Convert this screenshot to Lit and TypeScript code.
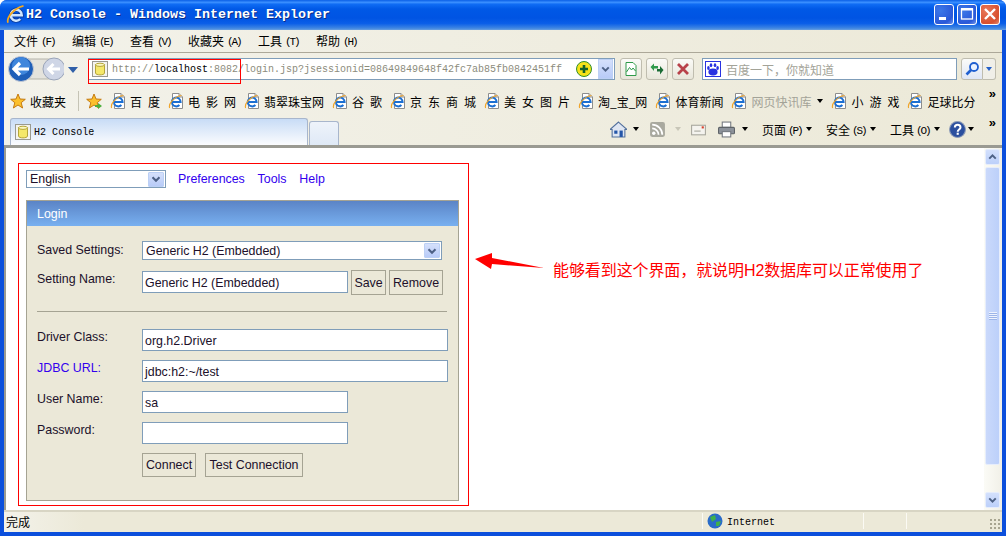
import { LitElement, html, css, svg } from "lit";
import { customElement } from "lit/decorators.js";

const chev = html`<svg class="chev" viewBox="0 0 16 16"><path d="M4 6 L8 10 L12 6" fill="none" stroke="#4d6185" stroke-width="2.4"/></svg>`;
const db = html`<svg class="ico16" viewBox="0 0 16 16"><rect x=".5" y=".5" width="15" height="15" fill="#f4f3ee" stroke="#9a9a90"/><path d="M3.5 3.5 V12 C3.5 14.5 12.5 14.5 12.5 12 V3.5Z" fill="#f5e86a" stroke="#b5a53a"/><ellipse cx="8" cy="3.8" rx="4.5" ry="1.6" fill="#fbf7c0" stroke="#b5a53a"/></svg>`;
const logoE = (w = 1.9) => svg`<path d="M4.6 9 H12.6 A4.4 4.4 0 1 0 11.4 12" fill="none" stroke="#1c6fd2" stroke-width="${w}"/><path d="M1.6 15 C.2 11 6 3.5 13.5 2.5" fill="none" stroke="#f0a326" stroke-width="1.1"/>`;
const pageE = html`<svg class="ico16" viewBox="0 0 16 16"><path d="M4.5 .5 H11 L14.5 4 V15.5 H4.5Z" fill="#fff" stroke="#8d8d8d"/><path d="M11 .5 V4 H14.5" fill="#e4e4e4" stroke="#8d8d8d"/>${logoE(2)}</svg>`;
const star = svg`<path d="M8 1 L10 6 L15.3 6.3 L11.2 9.7 L12.6 15 L8 12 L3.4 15 L4.8 9.7 L.7 6.3 L6 6Z" fill="#fbc02d" stroke="#c47a12"/>`;
const more = html`<span class="more">»</span>`;

type Fav = { t: string; dim?: boolean; menu?: boolean };
const favs: Fav[] = [
  { t: "百 度" }, { t: "电 影 网" }, { t: "翡翠珠宝网" }, { t: "谷 歌" }, { t: "京 东 商 城" },
  { t: "美 女 图 片" }, { t: "淘_宝_网" }, { t: "体育新闻" }, { t: "网页快讯库", dim: true, menu: true },
  { t: "小 游 戏" }, { t: "足球比分" },
];
const menus = [["文件", "(F)"], ["编辑", "(E)"], ["查看", "(V)"], ["收藏夹", "(A)"], ["工具", "(T)"], ["帮助", "(H)"]];

@customElement("app-root")
export class AppRoot extends LitElement {
  static styles = css`
    :host { display: block; width: 1006px; height: 536px; overflow: hidden; background: #fff;
      font-family: "Noto Sans CJK SC", "Liberation Sans", sans-serif; font-size: 12px; color: #000; }
    * { box-sizing: border-box; }
    .win { height: 536px; display: flex; flex-direction: column; border-radius: 7px 7px 0 0; overflow: hidden;
      background: #0b4fdc; }
    .title { height: 30px; flex: none; display: flex; align-items: center; padding: 0 6px 2px 6px;
      background: linear-gradient(180deg,#0a5fe6 0,#3a8fff 8%,#0f6cf4 14%,#0058e6 30%,#0054e3 60%,#0a5ee8 78%,#3f86e2 94%,#6aa0e0 100%); }
    .logo { width: 20px; height: 20px; flex: none; }
    .title-text { color: #fff; font: bold 13.33px "Liberation Mono", monospace; text-shadow: 1px 1px 0 #0a2f8a; white-space: pre; }
    .wbtns { margin-left: auto; display: flex; gap: 3px; }
    .wbtn { width: 20px; height: 21px; border: 1px solid #fff; border-radius: 3px; display: flex; align-items: center; justify-content: center;
      background: radial-gradient(circle at 30% 30%, #3c78e8, #2a58d8 70%, #6f94ea); }
    .wbtn.close { background: radial-gradient(circle at 30% 30%, #e8785a, #d8502e 70%, #e08a70); }
    .wbtn svg { width: 16px; height: 16px; }
    .inner { flex: 1; margin: 0 4px 4px 4px; min-height: 0; display: flex; flex-direction: column; background: #ece9d8; position: relative; }
    .menu { height: 23px; flex: none; display: flex; gap: 18px; align-items: center; padding: 0 0 1px 10px;
      background: linear-gradient(90deg,#f3f2ea,#ece9d8); border-bottom: 1px solid #aca899; }
    .mitem { display: flex; align-items: center; white-space: nowrap; }
    .key { font: 11px/12px "Liberation Mono", monospace; letter-spacing: -2.1px; margin-left: 3px; width: 13px; padding-top: 3px; }
    .addr { height: 34px; flex: none; display: flex; align-items: center; padding: 0 0 2px 4px;
      background: linear-gradient(90deg,#f3f2ea,#ece9d8); }
    .nav { width: 56px; height: 26px; flex: none; }
    .navcaret { width: 0; height: 0; border: 5px solid transparent; border-top: 6px solid #2f5fa8; border-bottom: 0; margin: 1px 10px 0 4px; flex: none; }
    .urlbox { width: 527px; height: 22px; flex: none; background: #fff; border: 1px solid #7f9db9; display: flex; align-items: center; padding: 0 1px 0 3px; }
    .url { margin-left: 4px; font: 10px "Liberation Mono", monospace; color: #8c8c7c; white-space: pre; }
    .url b { color: #000; font-weight: normal; }
    .plus { width: 16px; height: 16px; margin-left: 14px; flex: none; }
    .ddbtn { width: 15px; height: 20px; margin-left: auto; background: linear-gradient(#d5e0fb,#b8cbf8); border: 1px solid #bcd0f5; display: flex; align-items: center; justify-content: center; }
    .chev { width: 14px; height: 14px; }
    .tb { width: 22px; height: 22px; flex: none; border: 1px solid #bfbdaf; border-radius: 3px; background: linear-gradient(#fbfbf8,#e8e6da); display: flex; align-items: center; justify-content: center; margin-left: 4px; }
    .tb svg { width: 16px; height: 16px; }
    .tb.first { margin-left: 5px; }
    .search { width: 255px; height: 22px; flex: none; margin-left: 8px; background: #fff; border: 1px solid #7f9db9; display: flex; align-items: center; padding-left: 2px; color: #a3a398; }
    .paw { width: 16px; height: 16px; flex: none; margin-right: 5px; }
    .sbtn { width: 22px; height: 22px; flex: none; margin-left: 4px; border: 1px solid #bfbdaf; border-radius: 3px 0 0 3px; background: linear-gradient(#fbfbf8,#dfe6f5); display: flex; align-items: center; justify-content: center; }
    .sbtn svg { width: 16px; height: 16px; }
    .sdd { width: 13px; height: 22px; flex: none; border: 1px solid #bfbdaf; border-left: 0; border-radius: 0 3px 3px 0; background: #f0efe8; display: flex; align-items: center; justify-content: center; }
    .sdd i { width: 0; height: 0; border: 3px solid transparent; border-top: 4px solid #2560c8; border-bottom: 0; }
    .fav { height: 29px; flex: none; display: flex; align-items: center; padding: 0 0 1px 6px; position: relative;
      background: linear-gradient(90deg,#f3f2ea,#ece9d8); white-space: nowrap; }
    .ico16 { width: 16px; height: 16px; flex: none; display: block; }
    .favlabel { margin-left: 4px; }
    .sep { width: 1px; height: 20px; background: #c5c3b5; margin: 0 7px 0 12px; flex: none; }
    .fitem { display: flex; align-items: center; margin-left: 8px; word-spacing: 3.3px; }
    .fitem span { margin-left: 4px; }
    .fitem.dim span { color: #a3a398; }
    .caret { display: inline-block; width: 0; height: 0; border: 3px solid transparent; border-top: 4px solid #000; border-bottom: 0; flex: none; }
    .caret.after { margin-left: 6px; }
    .more { position: absolute; right: 6px; top: 0; font: bold 13px "Liberation Sans", sans-serif; line-height: 13px; }
    .tabs { height: 32px; flex: none; display: flex; align-items: flex-end; padding-left: 6px; position: relative;
      background: linear-gradient(90deg,#f3f2ea,#ece9d8); border-bottom: 3px solid #9a9a92; }
    .tab { width: 298px; height: 27px; border: 1px solid #a8b6cc; border-bottom: 0; border-radius: 3px 3px 0 0; display: flex; align-items: center; padding-left: 4px;
      background: linear-gradient(#c8dcf6,#fbfcfe); }
    .tab span { margin-left: 3px; font: 10px "Liberation Mono", monospace; letter-spacing: .04px; }
    .tab2 { width: 30px; height: 24px; margin-left: 1px; border: 1px solid #a8b6cc; border-bottom: 0; border-radius: 3px 3px 0 0; background: linear-gradient(#eef3fa,#dfe9f6); }
    .ttools { position: absolute; right: 28px; top: 3px; height: 20px; display: flex; align-items: center; white-space: nowrap; }
    .ttools svg { width: 17px; height: 17px; flex: none; }
    .tt { display: flex; align-items: center; }
    .tt .key { margin-left: 2px; }
    .c-home { margin: 0 10px 0 6px; }
    .c-rss { margin: 0 9px; border-top-color: #c8c6b8; }
    .c-print { margin: 0 14px 0 7px; }
    .c-m { margin: 0 14px 0 5px; }
    .c-t { margin: 0 9px 0 5px; }
    .c-h { margin-left: 2px; }
    .printer { margin-left: 11px; }
    .content { flex: 1; min-height: 0; display: flex; background: #fff; border-left: 2px solid #9a9a92; position: relative; }
    .page { flex: 1; padding: 15px 0 0 12px; }
    .scroll { width: 18px; flex: none; padding: 1px 2px 2px 1px; background: linear-gradient(90deg,#fbfbf6,#f1f0e8); display: flex; flex-direction: column; gap: 2px; }
    .sb { height: 16px; flex: none; background: linear-gradient(#d3e0fc,#bcd0fa); border: 1px solid #e6edfc; border-radius: 2px; display: flex; align-items: center; justify-content: center; }
    .sb.up .chev { transform: rotate(180deg); }
    .thumb { height: 298px; flex: none; background: linear-gradient(90deg,#cad9fb,#bcd0fa); border: 1px solid #e6edfc; border-radius: 2px; display: flex; align-items: center; justify-content: center; }
    .grip { width: 8px; height: 8px; background: repeating-linear-gradient(#eef3fe 0 1px,#9db5e8 1px 2px); }
    .push { margin-top: auto; }
    .status { height: 22px; flex: none; display: flex; align-items: center; padding: 0 0 2px 2px; border-top: 2px solid #d8d5c4; background: linear-gradient(90deg,#f3f2ea 0,#ece9d8 8%); }
    .st-sep { width: 1px; height: 16px; background: #fbfaf4; flex: none; }
    .s1 { margin-left: 672px; }
    .s2 { margin-left: 88px; }
    .s3 { margin-left: 42px; }
    .globe { margin-left: 4px; }
    .net { font: 10px "Liberation Mono", monospace; margin-left: 4px; padding-top: 2px; }
    .grip2 { width: 11px; height: 11px; margin-left: 82px; margin-top: 5px; flex: none; background-image: radial-gradient(#a8a590 1px, transparent 1.2px); background-size: 4px 4px; }

    .redbox { width: 451px; height: 343px; border: 1px solid #f00; padding: 6px 7px; font-family: "Liberation Sans", sans-serif; font-size: 12.4px; color: #20102a; }
    .top { height: 18px; display: flex; align-items: center; }
    .sel { background: #fff; border: 1px solid #7f9db9; display: flex; align-items: center; justify-content: space-between; padding: 0 1px 0 3px; }
    .sel .dd { width: 16px; height: 15px; background: linear-gradient(#d5e0fb,#b8cbf8); border: 1px solid #bcd0f5; border-radius: 1px; display: flex; align-items: center; justify-content: center; }
    .sel.lang { width: 140px; height: 18px; }
    .sel.saved { width: 300px; height: 19px; }
    .links { display: flex; gap: 12.8px; margin-left: 12px; color: #3300ee; }
    .panel { margin-top: 12px; width: 433px; height: 301px; border: 1px solid #a5a393; background: #ebe8d8; }
    .phead { height: 25px; display: flex; align-items: center; padding-left: 10px; color: #fff; background: linear-gradient(#5b84c6,#78b0f0); }
    .pbody { padding: 15px 0 0 10px; }
    .row { display: grid; grid-template-columns: 105px 1fr; align-items: start; }
    .lab { line-height: 15px; margin-top: 1px; }
    .lab.saved { margin-top: 2px; }
    .lab.jdbc { color: #3300ee; }
    .inp { height: 22px; background: #fff; border: 1px solid #7f9db9; padding: 1px 3px 0 2px; display: flex; align-items: center; }
    .w206 { width: 206px; }
    .w306 { width: 306px; }
    .m { margin-top: 9px; }
    .m10 { margin-top: 10px; }
    .rowctl { display: flex; align-items: flex-start; gap: 3px; }
    .rowctl .inp { margin-top: 1px; }
    .btn { border: 1px solid #a5a393; background: #ebe8d8; display: flex; align-items: center; justify-content: center; height: 25px; white-space: nowrap; }
    .btn.short { height: 24px; }
    .b35 { width: 35px; }
    .b54 { width: 54px; }
    .b98 { width: 98px; }
    .btn.gap { margin-right: 6px; }
    .hr { height: 1px; background: #a5a393; width: 410px; margin: 16px 0 17px 0; }
    .mark { position: absolute; }
    .addrmark { left: 84px; top: 29px; width: 153px; height: 25px; border: 1px solid #f00; }
    .arrow { left: 468px; top: 104px; width: 74px; height: 18px; }
    .cap { left: 547px; top: 111px; font-size: 16px; line-height: 24px; color: #f00; white-space: nowrap; letter-spacing: -.09px; font-family: "Liberation Sans", "Noto Sans CJK SC", sans-serif; }
    .arrow svg { display: block; width: 74px; height: 18px; }
  `;

  render() {
    return html`<div class="win">
      <div class="title">
        <svg class="logo" viewBox="0 0 16 16">
          <path d="M4.6 9 H12.6 A4.4 4.4 0 1 0 11.4 12" fill="none" stroke="#0d3f9e" stroke-width="3.4"/>
          <path d="M4.6 9 H12.6 A4.4 4.4 0 1 0 11.4 12" fill="none" stroke="#cfe6ff" stroke-width="2"/>
          <path d="M1.6 15 C.2 11 6 3.5 14 1.5" fill="none" stroke="#f4a81e" stroke-width="1.4"/>
        </svg>
        <span class="title-text">H2 Console - Windows Internet Explorer</span>
        <div class="wbtns">
          <div class="wbtn"><svg viewBox="0 0 16 16"><rect x="3" y="11" width="7" height="3" fill="#fff"/></svg></div>
          <div class="wbtn"><svg viewBox="0 0 16 16"><rect x="2.5" y="3" width="11" height="10" fill="none" stroke="#fff" stroke-width="1.3"/><rect x="2" y="2" width="12" height="2.5" fill="#fff"/></svg></div>
          <div class="wbtn close"><svg viewBox="0 0 16 16"><path d="M3 3 L13 13 M13 3 L3 13" stroke="#fff" stroke-width="2.4"/></svg></div>
        </div>
      </div>
      <div class="inner">
        <div class="menu">${menus.map(([a, k]) => html`<div class="mitem">${a}<span class="key">${k}</span></div>`)}</div>
        <div class="addr">
          <svg class="nav" viewBox="0 0 56 26">
            <rect x="10" y="3" width="40" height="20" rx="10" fill="#e4e3dc" stroke="#b5b4aa"/>
            <circle cx="46" cy="13" r="11" fill="#cfd6e6" stroke="#9aa4b8"/>
            <path d="M52 13 H41 M45.5 8 L40.5 13 L45.5 18" fill="none" stroke="#fff" stroke-width="3"/>
            <circle cx="13" cy="13" r="12.5" fill="#1f5fb8" stroke="#c6cbd4"/>
            <circle cx="13" cy="10" r="9" fill="#3f86dc"/>
            <path d="M21 13 H7 M12 7 L6 13 L12 19" fill="none" stroke="#fff" stroke-width="3.2"/>
          </svg>
          <span class="navcaret"></span>
          <div class="urlbox">
            ${db}
            <span class="url">http://<b>localhost</b>:8082/login.jsp?jsessionid=08649849648f42fc7ab85fb0842451ff</span>
            <svg class="plus" viewBox="0 0 16 16"><circle cx="8" cy="8" r="7.5" fill="#f6e21a" stroke="#2f8f2f"/><path d="M8 4 V12 M4 8 H12" stroke="#14622a" stroke-width="2.6"/></svg>
            <span class="ddbtn">${chev}</span>
          </div>
          <div class="tb first"><svg viewBox="0 0 16 16"><path d="M3 1.5 H10 L13 4.5 V14.5 H3Z" fill="#fff" stroke="#2f9a4a"/><path d="M3.5 11 L6.5 6.5 L8.5 9 L10 7 L12.5 10" fill="none" stroke="#2f9a4a"/></svg></div>
          <div class="tb"><svg viewBox="0 0 16 16"><path d="M1.5 6 L5 2.5 V5 H9 V7.5 H5 V10Z" fill="#2f9a4a"/><path d="M14.5 9 L11 13.5 V10.5 H8 V8 H11 V5Z" fill="#1a6b34"/></svg></div>
          <div class="tb"><svg viewBox="0 0 16 16"><path d="M3 3 L13 13 M13 3 L3 13" stroke="#b8424a" stroke-width="2.8"/></svg></div>
          <div class="search">
            <svg class="paw" viewBox="0 0 16 16"><rect x=".5" y=".5" width="15" height="15" fill="#fff" stroke="#2932e1"/><ellipse cx="8" cy="11" rx="4.6" ry="3.4" fill="#2932e1"/><ellipse cx="3.4" cy="7" rx="1.3" ry="1.9" fill="#2932e1"/><ellipse cx="12.6" cy="7" rx="1.3" ry="1.9" fill="#2932e1"/><ellipse cx="6" cy="4.2" rx="1.3" ry="1.9" fill="#2932e1"/><ellipse cx="10" cy="4.2" rx="1.3" ry="1.9" fill="#2932e1"/></svg>
            百度一下，你就知道
          </div>
          <div class="sbtn"><svg viewBox="0 0 16 16"><circle cx="10" cy="6" r="4" fill="#eaf2ff" stroke="#1f5fd0" stroke-width="1.8"/><path d="M7 9 L2.5 13.5" stroke="#1f5fd0" stroke-width="2.6"/></svg></div>
          <div class="sdd"><i></i></div>
        </div>
        <div class="fav">
          <svg class="ico16" viewBox="0 0 16 16">${star}</svg>
          <span class="favlabel">收藏夹</span>
          <span class="sep"></span>
          <svg class="ico16" viewBox="0 0 16 16">${star}<path d="M9 12 H12 V10 L16 13 L12 16 V14 H9Z" fill="#4caf3c"/></svg>
          ${favs.map((f) => html`<div class="fitem ${f.dim ? "dim" : ""}">${pageE}<span>${f.t}</span>${f.menu ? html`<i class="caret after"></i>` : ""}</div>`)}
          ${more}
        </div>
        <div class="tabs">
          <div class="tab">${db}<span>H2 Console</span></div>
          <div class="tab2"></div>
          <div class="ttools">
            <svg viewBox="0 0 16 16"><path d="M8 1 L16 8 H14 V15 H2 V8 H0Z" fill="#dfe6f2" stroke="#52709c"/><rect x="9" y="9" width="3" height="6" fill="#2456a8"/><rect x="4" y="9" width="3" height="3" fill="#2456a8"/></svg>
            <i class="caret c-home"></i>
            <svg viewBox="0 0 16 16"><rect x="1" y="1" width="14" height="14" rx="2" fill="#a9a99f"/><circle cx="4.5" cy="11.5" r="1.6" fill="#fff"/><path d="M3 7 A6 6 0 0 1 9 13 M3 3.5 A9.5 9.5 0 0 1 12.5 13" fill="none" stroke="#fff" stroke-width="1.6"/></svg>
            <i class="caret c-rss"></i>
            <svg viewBox="0 0 16 16"><rect x="1.5" y="4" width="13" height="9" fill="#f4f3ee" stroke="#a6a69c"/><rect x="11" y="5" width="2" height="2" fill="#d8402c"/><rect x="4" y="9" width="6" height="1" fill="#a6a69c"/></svg>
            <svg class="printer" viewBox="0 0 16 16"><rect x="4" y="1" width="8" height="5" fill="#fff" stroke="#73787f"/><rect x=".5" y="6" width="15" height="6" rx="1" fill="#8c929a" stroke="#5e6368"/><rect x="4" y="10" width="8" height="5" fill="#fff" stroke="#73787f"/></svg>
            <i class="caret c-print"></i>
            <div class="tt">页面<span class="key">(P)</span></div><i class="caret c-m"></i>
            <div class="tt">安全<span class="key">(S)</span></div><i class="caret c-m"></i>
            <div class="tt">工具<span class="key">(O)</span></div><i class="caret c-t"></i>
            <svg viewBox="0 0 16 16"><circle cx="8" cy="8" r="7.5" fill="#2b4f9e" stroke="#8f9db8"/><path d="M5.5 6 C5.5 2.8 10.8 2.8 10.8 6 C10.8 8 8.2 8 8.2 10" fill="none" stroke="#fff" stroke-width="1.9"/><rect x="7.2" y="11" width="2" height="2" fill="#fff"/></svg>
            <i class="caret c-h"></i>
          </div>
          ${more}
        </div>
        <div class="content">
          <div class="page">
            <div class="redbox">
              <div class="top">
                <div class="sel lang"><span>English</span><span class="dd">${chev}</span></div>
                <div class="links"><span>Preferences</span><span>Tools</span><span>Help</span></div>
              </div>
              <div class="panel">
                <div class="phead">Login</div>
                <div class="pbody">
                  <div class="row"><span class="lab saved">Saved Settings:</span><div class="sel saved"><span>Generic H2 (Embedded)</span><span class="dd">${chev}</span></div></div>
                  <div class="row m10"><span class="lab saved">Setting Name:</span>
                    <div class="rowctl"><div class="inp w206">Generic H2 (Embedded)</div><div class="btn b35">Save</div><div class="btn b54">Remove</div></div></div>
                  <div class="hr"></div>
                  <div class="row"><span class="lab">Driver Class:</span><div class="inp w306">org.h2.Driver</div></div>
                  <div class="row m"><span class="lab jdbc">JDBC URL:</span><div class="inp w306">jdbc:h2:~/test</div></div>
                  <div class="row m"><span class="lab">User Name:</span><div class="inp w206">sa</div></div>
                  <div class="row m"><span class="lab">Password:</span><div class="inp w206"></div></div>
                  <div class="row m"><span></span><div class="rowctl"><div class="btn short b54 gap">Connect</div><div class="btn short b98">Test Connection</div></div></div>
                </div>
              </div>
            </div>
          </div>
          <div class="scroll">
            <div class="sb up">${chev}</div>
            <div class="thumb"><div class="grip"></div></div>
            <div class="sb push">${chev}</div>
          </div>
          <div class="mark arrow"><svg viewBox="0 0 74 18"><path d="M1 7 L18 1 L18 6 L70 16 L18 12 L17 17Z" fill="#f00"/></svg></div>
          <div class="mark cap">能够看到这个界面，就说明H2数据库可以正常使用了</div>
        </div>
        <div class="status">
          <span>完成</span>
          <span class="st-sep s1"></span>
          <svg class="ico16 globe" viewBox="0 0 16 16"><circle cx="8" cy="8" r="7.5" fill="#2a6cc8"/><path d="M3 4 L8 2 L9 6 L5 9Z M9 9 L14 8 L12 13 L9 13Z" fill="#3fb04a"/></svg>
          <span class="net">Internet</span>
          <span class="st-sep s2"></span>
          <span class="st-sep s3"></span>
          <span class="grip2"></span>
        </div>
        <div class="mark addrmark"></div>
      </div>
    </div>`;
  }
}
